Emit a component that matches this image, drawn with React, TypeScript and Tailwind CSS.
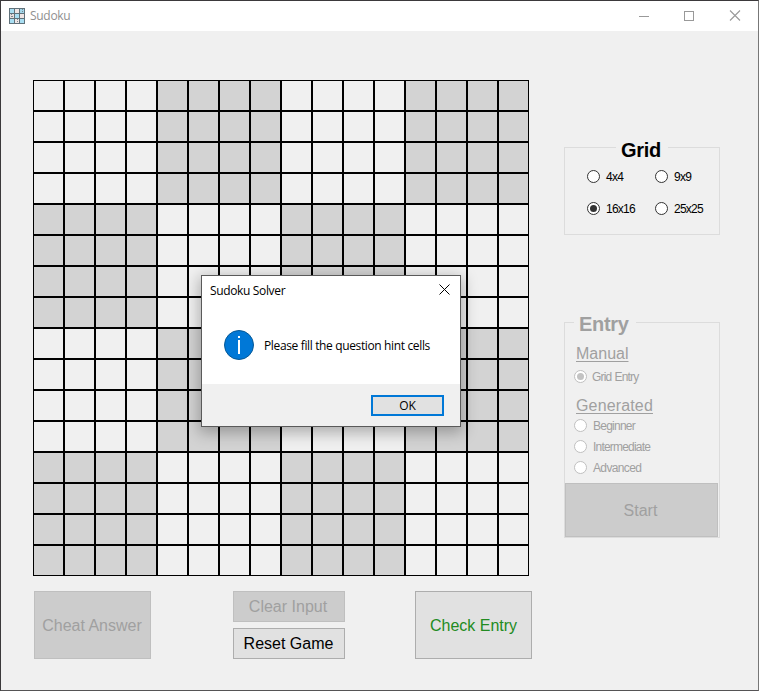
import React from "react";

const UI = "font-['Open_Sans','Noto_Sans',sans-serif] [font-variant-ligatures:none]";
const CELLS = Array.from({ length: 256 }, (_, i) => i);

function Radio({ label, checked, disabled, className = "", text = "" }: { label: string; checked?: boolean; disabled?: boolean; className?: string; text?: string }) {
  return (
    <label className={`flex h-[13px] items-center whitespace-nowrap text-[12px] leading-[13px] ${disabled ? "text-[#a0a0a0]" : "text-black"} ${className}`}>
      <svg width="13" height="13" viewBox="0 0 13 13" className="mr-[6px] shrink-0">
        <circle cx="6.5" cy="6.5" r="6" fill="#fff" stroke={disabled ? "#bfbfbf" : "#333"} />
        {checked && <circle cx="6.5" cy="6.5" r="3.5" fill={disabled ? "#c3c3c3" : "#333"} />}
      </svg>
      <span className={`pt-[2px] ${text}`}>{label}</span>
    </label>
  );
}

function PuzzleIcon() {
  const tints = ["#a9def2", "#eee6e6", "#a3d6ea", "#e6dede", "#a9def2", "#eee6e6", "#a9def2", "#eee6e6", "#a9def2"];
  return (
    <svg width="16" height="16" viewBox="0 0 16 16" shapeRendering="crispEdges">
      <rect width="16" height="16" fill="#60717a" />
      {tints.map((c, i) => (
        <rect key={i} x={1 + (i % 3) * 5} y={1 + Math.floor(i / 3) * 5} width="4" height="4" fill={c} />
      ))}
      <path d="M13 1.500h1M13 3.500h1M2 6.500h1M2 8.500h2M8 11.500h1M8 13.500h1" stroke="#7c8a92" fill="none" />
    </svg>
  );
}

function Dialog() {
  return (
    <div className={`absolute left-[200px] top-[274px] flex h-[152px] w-[260px] flex-col border border-[#5a5a5a] bg-white text-[12px] text-black shadow-[0_4px_14px_2px_rgba(0,0,0,0.28)] ${UI}`}>
      <div className="flex h-[30px] items-center justify-between pl-2 pr-[10px]">
        <span className="text-[12px] tracking-[-0.35px]">Sudoku Solver</span>
        <svg width="11" height="11" viewBox="0 0 11 11" className="-mt-[3px]">
          <path d="M.5.5l10 10M10.5.5l-10 10" stroke="#000" fill="none" />
        </svg>
      </div>
      <div className="flex h-[78px] items-center pl-[22px]">
        <svg width="30" height="30" viewBox="0 0 30 30">
          <circle cx="15" cy="15" r="14.5" fill="#0078d7" stroke="#075996" />
          <path d="M14 6h2v2h-2zM14 10h2v14h-2z" fill="#fff" />
        </svg>
        <span className="ml-[10px] whitespace-nowrap pt-[2px] tracking-[-0.36px]">Please fill the question hint cells</span>
      </div>
      <div className="flex flex-1 justify-end bg-[#f0f0f0] pr-4 pt-[11px]">
        <button className="h-[21px] w-[73px] border-2 border-[#0078d7] bg-[#e1e1e1] text-[12px] leading-[17px]">OK</button>
      </div>
    </div>
  );
}

export default function App() {
  return (
    <div className="relative flex h-[691px] w-[759px] flex-col overflow-hidden border border-[#3b393b] border-b-[#555355] border-r-[#777] bg-[#f0f0f0] font-['Liberation_Sans',Arial,sans-serif]">
      <header className="flex h-[30px] shrink-0 items-center bg-white pl-2">
        <PuzzleIcon />
        <span className={`ml-[5px] text-[12px] tracking-[-0.3px] text-[#909090] ${UI}`}>Sudoku</span>
        <div className="ml-auto flex items-center pr-[17px] text-[#999]">
          <svg width="102" height="12" viewBox="0 0 102 12" fill="none" stroke="currentColor">
            <path d="M0 6.5h10" />
            <rect x="45.500" y="1.500" width="9" height="9" />
            <path d="M91 .5l10 10M101 .5l-10 10" strokeWidth="1.100" />
          </svg>
        </div>
      </header>

      <main className="flex flex-1">
        <section className="w-[531px] shrink-0 pl-8 pt-[49px]">
          <div className="grid w-[496px] grid-cols-16">
            {CELLS.map((i) => {
              const shaded = (Math.floor(i / 64) + Math.floor((i % 16) / 4)) % 2 === 1;
              return <div key={i} className={`size-[31px] border border-black ${shaded ? "bg-[#d3d3d3]" : "bg-[#f0f0f0]"}`} />;
            })}
          </div>
          <div className="mt-[15px] flex pl-px text-[16px]">
            <button className="h-[68px] w-[117px] whitespace-nowrap border border-[#bfbfbf] bg-[#cccccc] pr-px pt-[2px] text-[#a0a0a0]">Cheat Answer</button>
            <div className="ml-[82px] flex flex-col gap-[6px]">
              <button className="h-[31px] w-[112px] border border-[#bfbfbf] bg-[#cccccc] pr-[2px] text-[#a0a0a0]">Clear Input</button>
              <button className="h-[31px] w-[112px] whitespace-nowrap border border-[#adadad] bg-[#e1e1e1] pr-px text-black">Reset Game</button>
            </div>
            <button className="ml-[70px] h-[68px] w-[117px] shrink-0 border border-[#adadad] bg-[#e1e1e1] pt-[2px] text-[#228b22]">Check Entry</button>
          </div>
        </section>

        <aside className="ml-8 w-[156px] pt-[106px]">
          <fieldset className="h-[98px] w-[156px] min-w-0 border border-[#dcdcdc]">
            <legend className="ml-[51px] h-[21px] w-[52px]">
              <span className="block pl-[5px] pt-px text-[20px] font-bold leading-[25px] tracking-[-0.3px]">Grid</span>
            </legend>
            <div className="grid grid-cols-[68px_60px] gap-y-[19px] pl-[22px] pt-[12px]">
              <Radio label="4x4" text="tracking-[-0.7px]" />
              <Radio label="9x9" text="tracking-[-0.7px]" />
              <Radio label="16x16" text="tracking-[-0.75px]" checked />
              <Radio label="25x25" text="tracking-[-0.75px]" />
            </div>
          </fieldset>
          <fieldset className="mt-[77px] h-[226px] border border-[#dcdcdc] text-[#a0a0a0]">
            <legend className="ml-[9px] h-[21px] w-[62px]">
              <span className="block pl-[5px] pt-px text-[20px] font-bold leading-[23px] tracking-[-0.3px]">Entry</span>
            </legend>
            <div className="flex h-[150px] flex-col pl-[9px] pt-[10px]">
              <h3 className="ml-[2px] h-[18px] text-[16px] leading-[22px] underline decoration-1 underline-offset-2">Manual</h3>
              <Radio label="Grid Entry" text="-ml-px tracking-[-0.85px] [word-spacing:0.8px]" checked disabled className="mt-[9px]" />
              <h3 className="ml-[2px] mt-[12px] h-[18px] text-[16px] leading-[22px] tracking-[0.15px] underline decoration-1 underline-offset-2">Generated</h3>
              <Radio label="Beginner" text="tracking-[-0.75px]" disabled className="mt-[6px]" />
              <Radio label="Intermediate" text="tracking-[-0.8px]" disabled className="mt-2" />
              <Radio label="Advanced" text="tracking-[-0.65px]" disabled className="mt-2" />
            </div>
            <button className="block h-[54px] w-[153px] border border-[#bfbfbf] bg-[#cccccc] pr-[2px] pt-px text-[16px]">Start</button>
          </fieldset>
        </aside>
      </main>

      <Dialog />
    </div>
  );
}
